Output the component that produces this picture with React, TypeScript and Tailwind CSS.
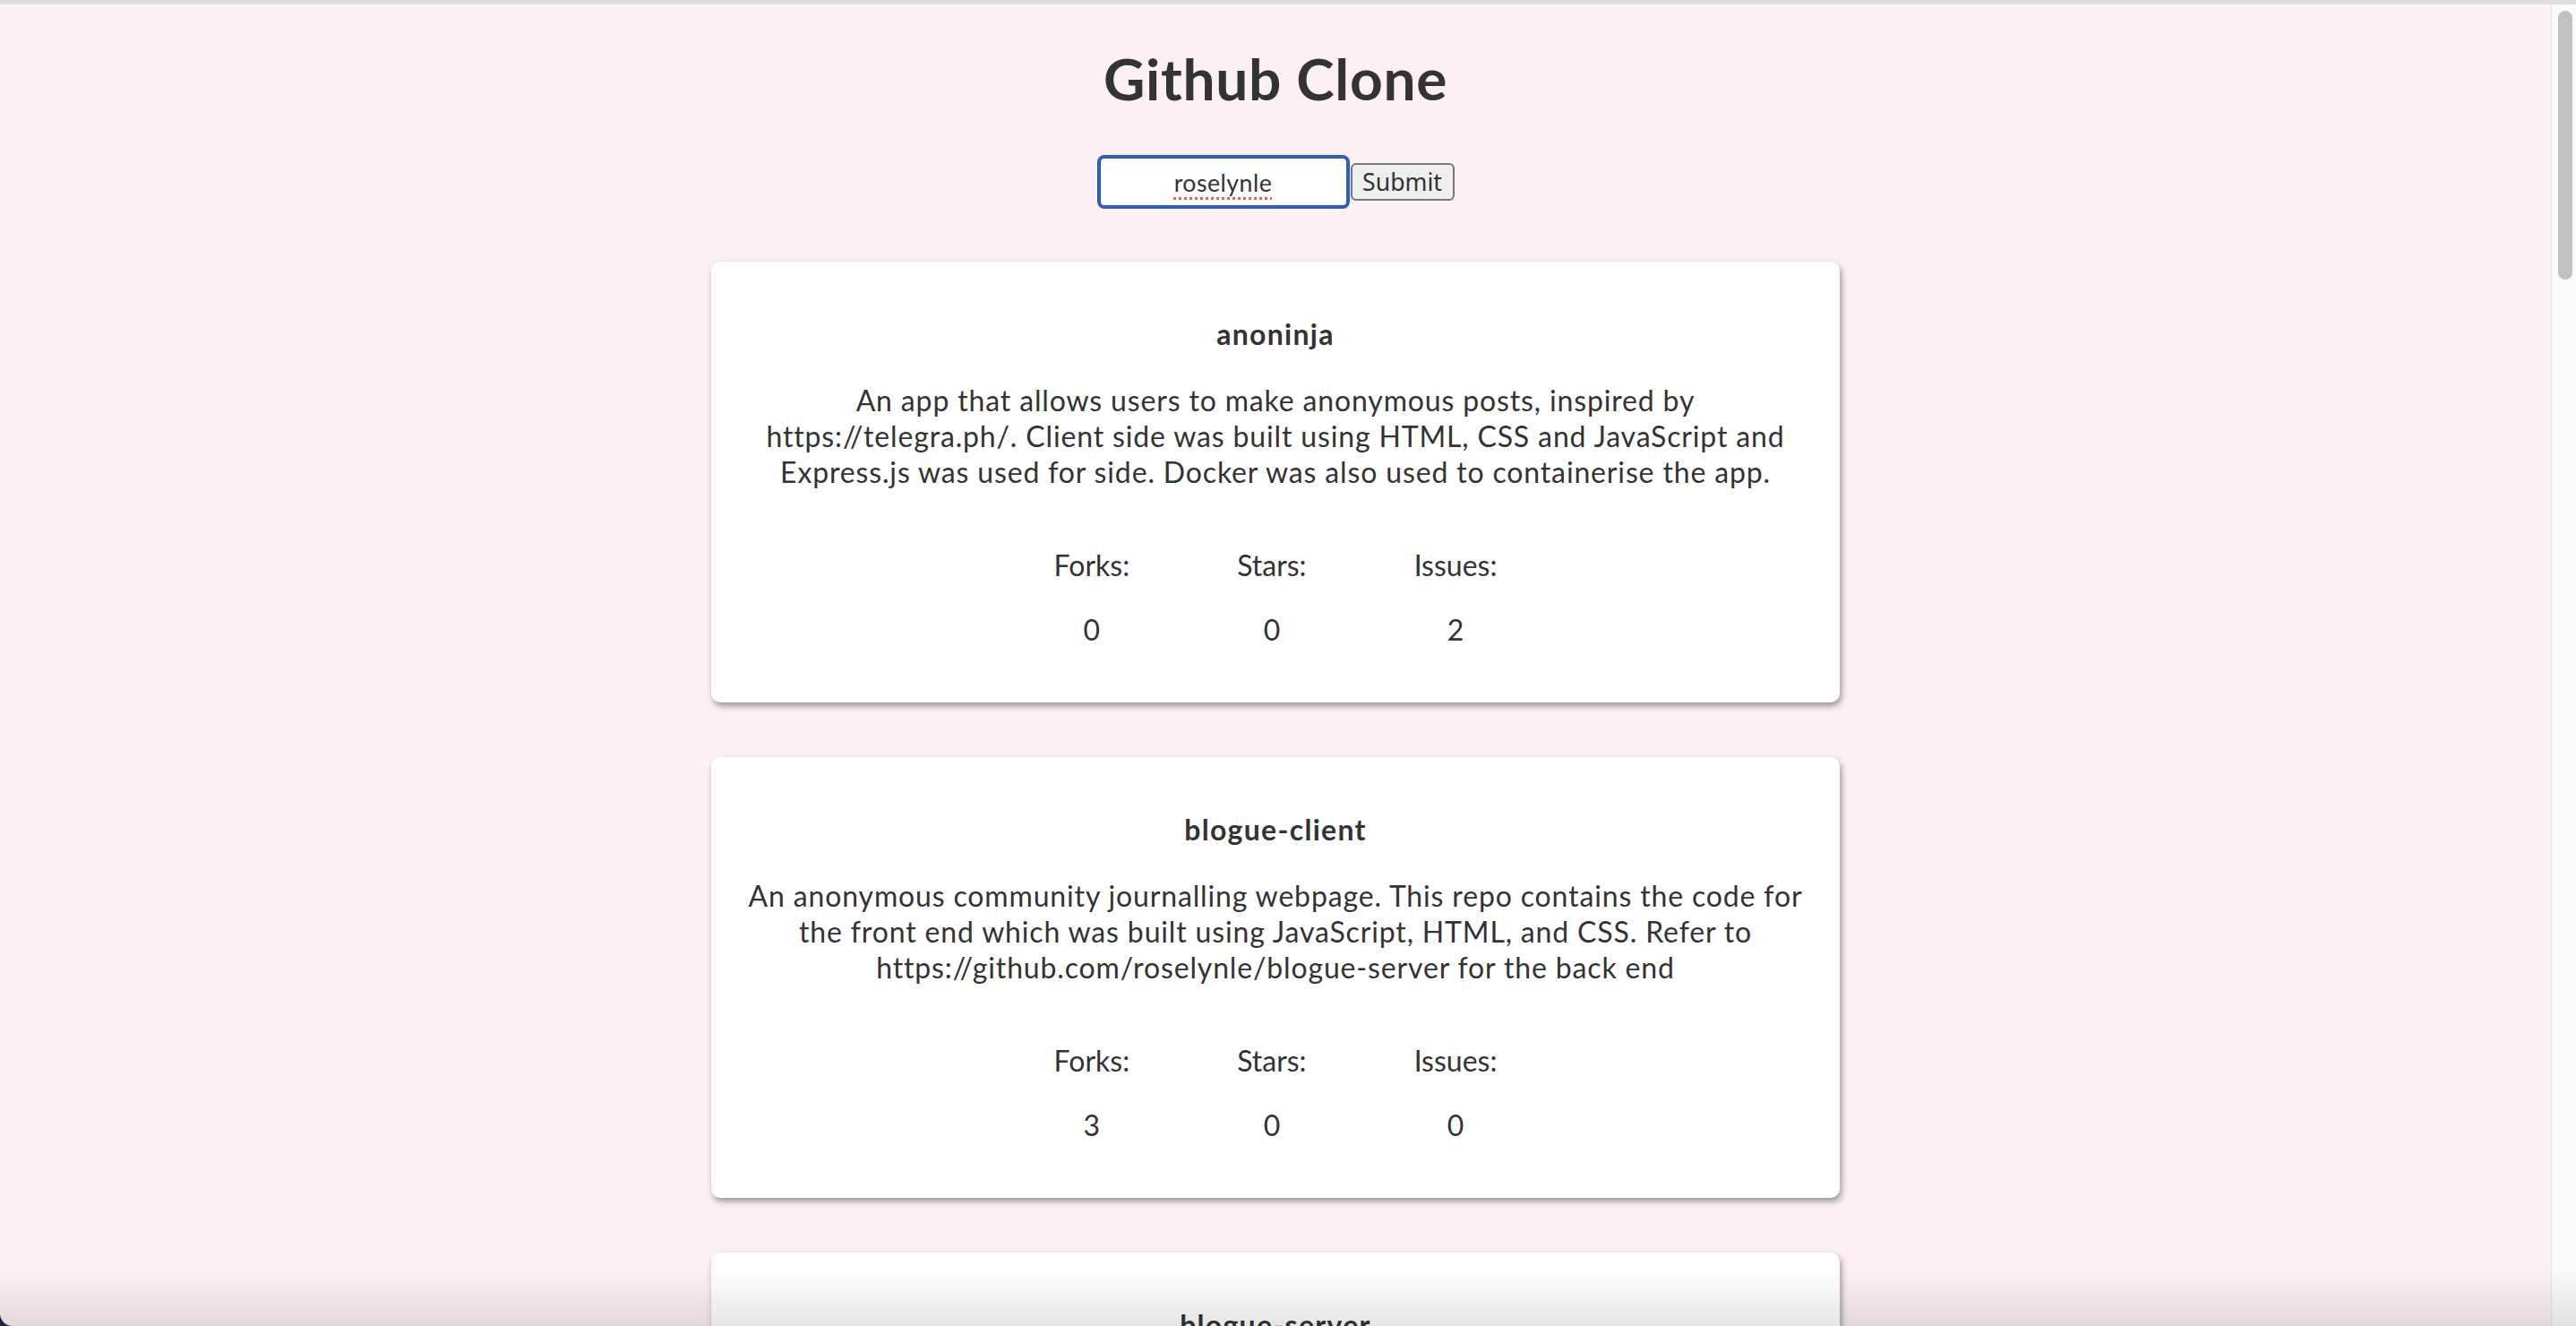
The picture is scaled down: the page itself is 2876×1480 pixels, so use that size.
import React from "react";

type Repo = {
  name: string;
  desc: string;
  forks: number;
  stars: number;
  issues: number;
};

const repos: Repo[] = [
  {
    name: "anoninja",
    desc: "An app that allows users to make anonymous posts, inspired by https://telegra.ph/. Client side was built using HTML, CSS and JavaScript and Express.js was used for side. Docker was also used to containerise the app.",
    forks: 0,
    stars: 0,
    issues: 2,
  },
  {
    name: "blogue-client",
    desc: "An anonymous community journalling webpage. This repo contains the code for the front end which was built using JavaScript, HTML, and CSS. Refer to https://github.com/roselynle/blogue-server for the back end",
    forks: 3,
    stars: 0,
    issues: 0,
  },
  {
    name: "blogue-server",
    desc: "An anonymous community journalling webpage. This repo contains the code for the back end which was built using Node.js and Express.js. Refer to https://github.com/roselynle/blogue-client for the front end",
    forks: 0,
    stars: 0,
    issues: 0,
  },
];

function Stat({ label, value }: { label: string; value: number }) {
  return (
    <div>
      <p className="my-[32px]">{label}</p>
      <p className="my-[32px]">{value}</p>
    </div>
  );
}

function RepoCard({ repo }: { repo: Repo }) {
  return (
    <div className="w-[1260px] shrink-0 rounded-[10px] bg-white px-[20px] pt-[10px] pb-[29px] text-center shadow-[2px_4px_7px_rgba(0,0,0,0.38)]">
      <h4 className="mt-[51px] mb-[34px] text-[32px] leading-[40px] font-bold tracking-[1.3px]">{repo.name}</h4>
      <p className="my-[32px] text-[32px] leading-[40px] tracking-[0.85px]">{repo.desc}</p>
      <div className="flex justify-center gap-[120px] text-[32px] leading-[40px]">
        <Stat label="Forks:" value={repo.forks} />
        <Stat label="Stars:" value={repo.stars} />
        <Stat label="Issues:" value={repo.issues} />
      </div>
    </div>
  );
}

export default function App() {
  return (
    <div className="relative flex h-[1480px] w-[2876px] flex-col overflow-hidden bg-[#fcf0f4] font-['Lato','Liberation_Sans',sans-serif] text-[#333333]">
      <div className="h-[5px] w-full shrink-0 bg-[#dedde2]" />
      <div className="flex min-h-0 flex-1">
        <main className="min-w-0 flex-1 overflow-hidden">
          <h1 className="mt-[43px] mb-[45px] text-center text-[64px] leading-[80px] font-bold tracking-[0.7px]">Github Clone</h1>
          <form className="flex items-center justify-center gap-[1px]" onSubmit={(e) => e.preventDefault()}>
            <div
              role="textbox"
              aria-label="GitHub username"
              className="flex h-[60px] w-[282px] items-center justify-center rounded-[8px] border-[4px] border-[#2a5dc5] bg-white pt-[2px] text-[26.67px] tracking-[0.5px] text-[#333333]"
            >
              <span className="underline decoration-[#e8654f] decoration-dotted decoration-[3px] underline-offset-[6px]">roselynle</span>
            </div>
            <button
              type="submit"
              className="h-[42px] w-[116px] rounded-[6px] border-2 border-[#767676] bg-[#efefef] font-['Noto_Sans',sans-serif] text-[26.67px] leading-[38px] text-[#333333]"
            >
              Submit
            </button>
          </form>
          <div className="mt-[59px] flex flex-col items-center gap-[61px]">
            {repos.map((r) => (
              <RepoCard key={r.name} repo={r} />
            ))}
          </div>
        </main>
        <div className="w-[28px] shrink-0 border-l border-[#e6e6e6] bg-[#fafafa] pt-[7px] pl-[7px]">
          <div className="h-[300px] w-[16px] rounded-full bg-[#c1c1c1]" />
        </div>
      </div>
      <div className="pointer-events-none absolute inset-x-0 bottom-0 h-[64px] bg-linear-to-b from-transparent to-black/10" />
      <div className="pointer-events-none absolute bottom-0 left-0 h-[14px] w-[14px] bg-[#1c2843]">
        <div className="h-full w-full rounded-bl-[14px] bg-[#e6dcdf]" />
      </div>
    </div>
  );
}
